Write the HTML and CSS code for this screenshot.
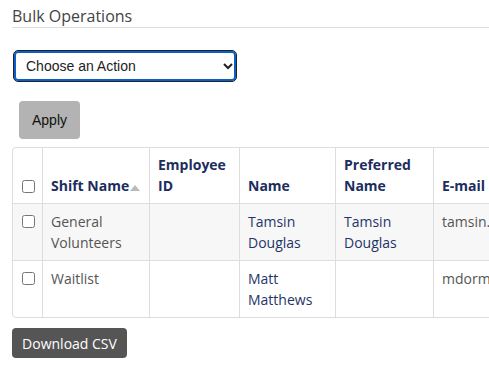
FILE: index.html
```html
<!DOCTYPE html>
<html lang="en">
<head>
  <meta charset="UTF-8">
  <title>Bulk Operations</title>
  <link rel="stylesheet" href="styles.css">
</head>
<body>
  <div class="bulk">
    <h2 class="section-title">Bulk Operations</h2>

    <form class="bulk-form">
      <select class="action-select">
        <option>Choose an Action</option>
        <option>Remove from shift</option>
        <option>Send message</option>
      </select>
      <button type="button" class="apply-btn">Apply</button>
    </form>

    <div class="table-wrap">
      <table class="roster">
        <colgroup>
          <col class="c-check">
          <col class="c-shift">
          <col class="c-emp">
          <col class="c-name">
          <col class="c-pref">
          <col class="c-mail">
        </colgroup>
        <thead>
          <tr>
            <th class="check"><input type="checkbox"></th>
            <th>Shift Name<span class="sort-up"></span></th>
            <th>Employee ID</th>
            <th>Name</th>
            <th>Preferred Name</th>
            <th>E-mail</th>
          </tr>
        </thead>
        <tbody>
          <tr class="odd">
            <td class="check"><input type="checkbox"></td>
            <td>General Volunteers</td>
            <td></td>
            <td class="link">Tamsin Douglas</td>
            <td class="link">Tamsin Douglas</td>
            <td>tamsin.douglas@example.org</td>
          </tr>
          <tr>
            <td class="check"><input type="checkbox"></td>
            <td>Waitlist</td>
            <td></td>
            <td class="link">Matt Matthews</td>
            <td></td>
            <td>mdormann@example.org</td>
          </tr>
        </tbody>
      </table>
    </div>

    <button type="button" class="csv-btn">Download CSV</button>
  </div>
</body>
</html>
```

FILE: styles.css
```css
body {
  margin: 0;
  padding: 5px 0 0 12px;
  font-family: "Open Sans", Arial, sans-serif;
  color: #555;
  background-color: white;
  overflow: hidden;
}

.section-title {
  margin: 0;
  font-size: 16px;
  font-weight: normal;
  line-height: 22px;
  color: #444;
  border-bottom: 1px solid #ddd;
}

.bulk-form {
  margin: 0;
}

.action-select {
  display: block;
  margin: 22px 0 0 1px;
  width: 224px;
  height: 32px;
  padding: 0 8px 0 8px;
  font-family: "Liberation Sans", Arial, sans-serif;
  font-size: 14px;
  color: #222;
  background-color: white;
  border: 1px solid #222;
  border-radius: 5px;
  box-shadow: inset 0 0 0 2px #0b5fc9;
  outline: none;
}

.apply-btn {
  display: block;
  margin: 19px 0 0 7px;
  width: 61px;
  height: 38px;
  padding: 0;
  font-family: "Liberation Sans", Arial, sans-serif;
  font-size: 14px;
  color: #111;
  background-color: #b3b3b3;
  border: none;
  border-radius: 4px;
}

.table-wrap {
  margin-top: 8px;
  width: 570px;
  border: 1px solid #ddd;
  border-radius: 4px;
  overflow: hidden;
}

.roster {
  table-layout: fixed;
  width: 570px;
  border-collapse: separate;
  border-spacing: 0;
  font-size: 14px;
  line-height: 21px;
}

.c-check { width: 29px; }
.c-shift { width: 107px; }
.c-emp { width: 90px; }
.c-name { width: 96px; }
.c-pref { width: 98px; }
.c-mail { width: 150px; }

.roster th,
.roster td {
  box-sizing: border-box;
  padding: 7px 8px 7px 8px;
  text-align: left;
  white-space: normal;
  overflow: hidden;
}

.roster th + th,
.roster td + td {
  border-left: 1px solid #ddd;
}

.roster th {
  padding-top: 6px;
  vertical-align: bottom;
  font-weight: bold;
  color: #1c2d5e;
}

.roster td {
  vertical-align: top;
  border-top: 1px solid #ddd;
}

.roster td:last-child {
  white-space: nowrap;
}

.roster tr.odd td {
  background-color: #f7f7f7;
}

.roster .link {
  color: #1f3468;
}

.roster .check {
  padding-left: 9px;
  padding-right: 0;
}

.roster .check input {
  margin: 0;
  width: 13px;
  height: 13px;
}

.roster th.check input {
  vertical-align: -2px;
}

.roster td.check input {
  vertical-align: -1px;
}

.sort-up {
  display: inline-block;
  margin-left: 1px;
  width: 0;
  height: 0;
  border-left: 5px solid transparent;
  border-right: 5px solid transparent;
  border-bottom: 6px solid #bbb;
  vertical-align: 0;
}

.csv-btn {
  display: block;
  margin-top: 10px;
  width: 115px;
  height: 30px;
  padding: 0;
  font-family: "Open Sans", Arial, sans-serif;
  font-size: 14px;
  color: white;
  background-color: #555;
  border: none;
  border-radius: 4px;
}
```
